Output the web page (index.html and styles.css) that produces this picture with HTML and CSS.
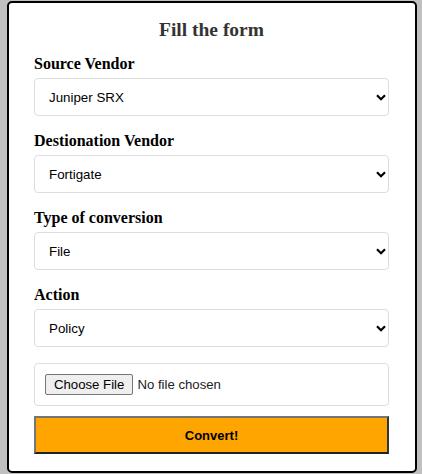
FILE: index.html
```html
<!DOCTYPE html>
<html>
<head>
<meta charset="utf-8">
<link rel="stylesheet" href="styles.css">
</head>
<body>
<div class="card">
  <h2 class="title">Fill the form</h2>
  <form class="form">
    <div class="field">
      <label class="label">Source Vendor</label>
      <div class="select-wrap">
        <select class="select"><option>Juniper SRX</option></select>
        <svg class="chev" width="10" height="7" viewBox="0 0 10 7"><path d="M1 1.2 L5 5.2 L9 1.2" fill="none" stroke="#000" stroke-width="2.2"/></svg>
      </div>
    </div>
    <div class="field">
      <label class="label">Destionation Vendor</label>
      <div class="select-wrap">
        <select class="select"><option>Fortigate</option></select>
        <svg class="chev" width="10" height="7" viewBox="0 0 10 7"><path d="M1 1.2 L5 5.2 L9 1.2" fill="none" stroke="#000" stroke-width="2.2"/></svg>
      </div>
    </div>
    <div class="field">
      <label class="label">Type of conversion</label>
      <div class="select-wrap">
        <select class="select"><option>File</option></select>
        <svg class="chev" width="10" height="7" viewBox="0 0 10 7"><path d="M1 1.2 L5 5.2 L9 1.2" fill="none" stroke="#000" stroke-width="2.2"/></svg>
      </div>
    </div>
    <div class="field">
      <label class="label">Action</label>
      <div class="select-wrap">
        <select class="select"><option>Policy</option></select>
        <svg class="chev" width="10" height="7" viewBox="0 0 10 7"><path d="M1 1.2 L5 5.2 L9 1.2" fill="none" stroke="#000" stroke-width="2.2"/></svg>
      </div>
    </div>
    <div class="filebox">
      <input type="file" class="file">
    </div>
    <button type="button" class="convert">Convert!</button>
  </form>
</div>
</body>
</html>
```

FILE: styles.css
```css
html, body {
  margin: 0;
  padding: 0;
  background: #c0c0c0;
}
body {
  padding-top: 1px;
  height: 473px;
  overflow: hidden;
}
.card {
  box-sizing: border-box;
  width: 410px;
  height: 472px;
  margin-left: 7px;
  background: #fff;
  border: 2px solid #000;
  border-radius: 5px;
  padding: 15px 26px 0 25px;
}
.title {
  margin: 0 0 14px 0;
  font-family: "Liberation Serif", serif;
  font-size: 19.5px;
  line-height: 23px;
  font-weight: bold;
  color: #333;
  text-align: center;
}
.form {
  display: flex;
  flex-direction: column;
}
.field {
  display: flex;
  flex-direction: column;
  margin-bottom: 16px;
}
.label {
  font-family: "Liberation Serif", serif;
  font-size: 16px;
  line-height: 18px;
  font-weight: bold;
  color: #000;
  margin-bottom: 5px;
}
.select-wrap {
  position: relative;
}
.select {
  appearance: none;
  -webkit-appearance: none;
  box-sizing: border-box;
  width: 100%;
  height: 38px;
  border: 1px solid #ddd;
  border-radius: 4px;
  background: #fff;
  padding: 0 14px;
  font-family: "Liberation Sans", Arial, sans-serif;
  font-size: 13.33px;
  color: #000;
  outline: none;
}
.chev {
  position: absolute;
  right: 3px;
  top: 16px;
  pointer-events: none;
}
.filebox {
  box-sizing: border-box;
  height: 43px;
  border: 1px solid #ddd;
  border-radius: 4px;
  padding: 0 10px;
  display: flex;
  align-items: center;
  margin-bottom: 10px;
}
.file {
  font-family: "Liberation Sans", Arial, sans-serif;
  font-size: 13.2px;
  color: #222;
}
.file::file-selector-button {
  font-family: "Liberation Sans", Arial, sans-serif;
  font-size: 13.2px;
  background: #efefef;
  border: 1px solid #767676;
  border-radius: 2px;
  padding: 2px 8px;
  margin-right: 4px;
  color: #000;
}
.convert {
  box-sizing: border-box;
  height: 38px;
  width: 100%;
  background: #ffa500;
  border: 2px solid #767676;
  border-color: #767676 #333 #222 #767676;
  font-family: "Liberation Sans", Arial, sans-serif;
  font-size: 13px;
  font-weight: bold;
  color: #000;
  padding: 0;
}
```
